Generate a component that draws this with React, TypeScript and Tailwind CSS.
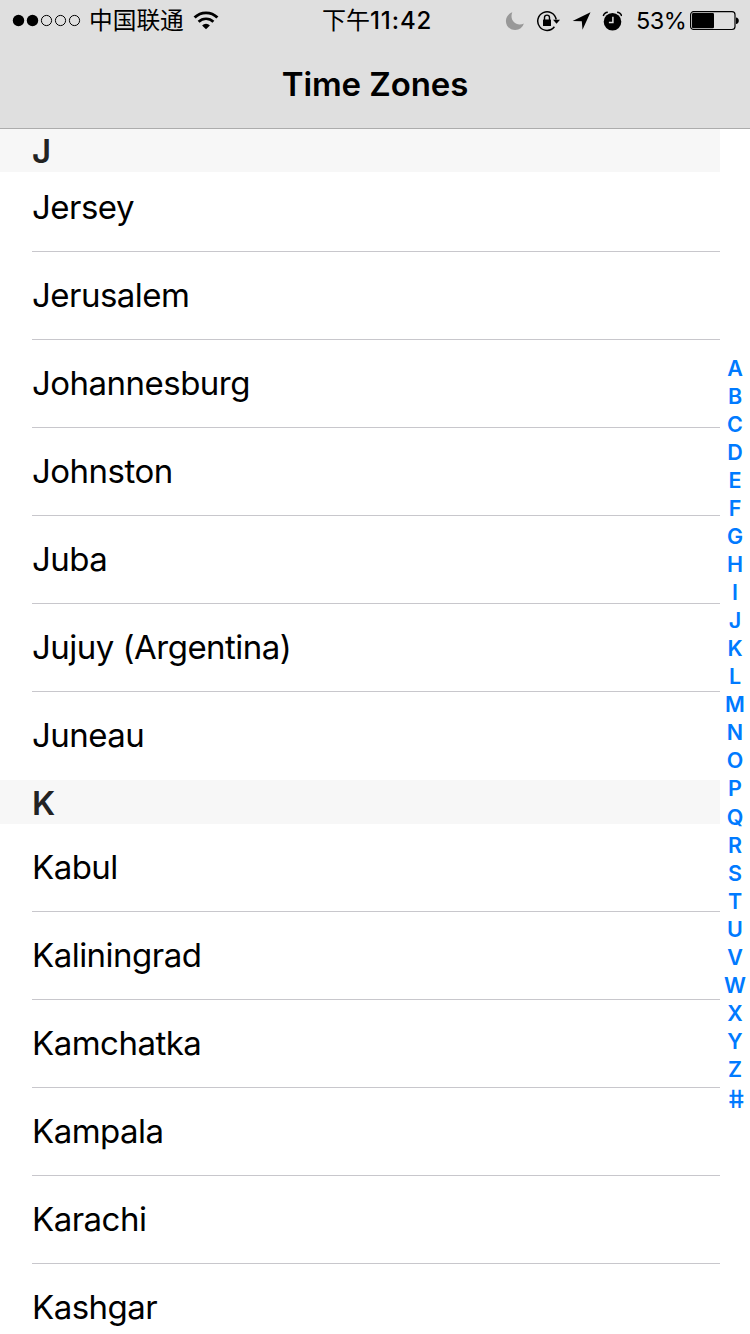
const SECTIONS = [
  {
    letter: 'J',
    zones: ['Jersey', 'Jerusalem', 'Johannesburg', 'Johnston', 'Juba', 'Jujuy (Argentina)', 'Juneau'],
  },
  {
    letter: 'K',
    zones: ['Kabul', 'Kaliningrad', 'Kamchatka', 'Kampala', 'Karachi', 'Kashgar'],
  },
];

const INDEX = 'ABCDEFGHIJKLMNOPQRSTUVWXYZ'.split('');

function SignalDots() {
  return (
    <svg className="h-[14px] w-[70px] shrink-0" viewBox="0 0 70 14">
      {[0, 1, 2, 3, 4].map((i) => (
        <circle
          key={i}
          cx={6.5 + i * 14}
          cy={6.5}
          r={i < 2 ? 5.7 : 5.1}
          fill={i < 2 ? '#000' : 'none'}
          stroke={i < 2 ? 'none' : '#000'}
          strokeWidth={1}
        />
      ))}
    </svg>
  );
}

function WifiIcon() {
  return (
    <svg className="h-[19px] w-[26px] shrink-0" viewBox="0 0 26 19" fill="none" stroke="#000">
      <path d="M1.6 6.6a16.1 16.1 0 0 1 22.8 0" strokeWidth="2.9" />
      <path d="M5.6 10.8a10.5 10.5 0 0 1 14.8 0" strokeWidth="2.7" />
      <path d="M13 18.3l-3.9-3.9a5.5 5.5 0 0 1 7.8 0z" fill="#000" stroke="none" />
    </svg>
  );
}

function MoonIcon() {
  return (
    <svg className="h-[20px] w-[20px] shrink-0" viewBox="0 0 20 20">
      <path d="M7.3 1.2a10 10 0 0 0-.8 3.9c0 5 3.6 8.4 8.2 8.4 1.6 0 3-.3 4.2-.9A9.3 9.3 0 0 1 10.2 19C5 19 .9 15 .9 9.9.9 6 3.5 2.6 7.3 1.2z" fill="#989898" />
    </svg>
  );
}

function RotationLockIcon() {
  return (
    <svg className="h-[22px] w-[24px] shrink-0" viewBox="0 0 24 22" fill="none" stroke="#000">
      <path d="M20.2 9.500a9.3 9.3 0 1 0-1.8 7.3" strokeWidth="1.5" />
      <path d="M17 9.7h7l-3.5 4z" fill="#000" stroke="none" />
      <rect x="7" y="9.500" width="8" height="6.600" rx=".5" fill="#000" stroke="none" />
      <path d="M8.500 10V7.600a2.500 2.500 0 0 1 5 0V10" strokeWidth="1.400" />
    </svg>
  );
}

function LocationIcon() {
  return (
    <svg className="h-[18px] w-[19px] shrink-0" viewBox="0 0 19 18">
      <path d="M18.5.3 10.500 17.700 9.800 9.300.6 8.900z" fill="#000" />
    </svg>
  );
}

function AlarmIcon() {
  return (
    <svg className="h-[20px] w-[20px] shrink-0" viewBox="0 0 20 20" fill="none">
      <circle cx="10.500" cy="10.800" r="8.800" fill="#000" />
      <path d="M10.900 5.700v5.700H6.900" stroke="#dfdfdf" strokeWidth="1.500" />
      <path d="M1.300 5A5 5 0 0 1 5.800 1.300M15.100 1.300a5 5 0 0 1 4.500 3.700" stroke="#000" strokeWidth="1.500" />
    </svg>
  );
}

function BatteryIcon() {
  return (
    <svg className="h-[20px] w-[50px] shrink-0" viewBox="0 0 50 20">
      <rect x=".6" y=".7" width="44.400" height="17.800" rx="3" fill="none" stroke="#000" strokeWidth="1.2" />
      <rect x="2" y="2" width="22" height="15.200" rx="1.2" fill="#000" />
      <path d="M46 6.500c1.700 0 2.800 1.500 2.800 3.300s-1.100 3.300-2.800 3.300z" fill="#000" />
    </svg>
  );
}

function StatusBar() {
  return (
    <div className="flex h-[42px] w-full items-center">
      <div className="flex w-[322px] shrink-0 items-center pl-3">
        <SignalDots />
        <span className="ml-[7px] w-[96px] whitespace-nowrap text-[23.7px] leading-[42px]">中国联通</span>
        <span className="ml-2 flex pb-0.5"><WifiIcon /></span>
      </div>
      <div className="w-[183px] shrink-0 whitespace-nowrap text-[24px] font-medium leading-[42px] tracking-[0.9px]">
        <span className="font-normal tracking-normal">下午</span>11:42
      </div>
      <MoonIcon />
      <span className="ml-[11px] flex"><RotationLockIcon /></span>
      <span className="ml-[12px] flex"><LocationIcon /></span>
      <span className="ml-[11px] flex pb-px"><AlarmIcon /></span>
      <span className="ml-[14px] w-[54px] whitespace-nowrap text-[23.5px] leading-[42px] tracking-[-0.5px]">53%</span>
      <BatteryIcon />
    </div>
  );
}

function SectionHeader({ letter }: { letter: string }) {
  return (
    <h2 className="h-11 bg-[#f7f7f7] pl-8 text-[33px] font-semibold leading-[47px] text-[#232323]">{letter}</h2>
  );
}

export default function App() {
  return (
    <div className="flex h-[1334px] w-[750px] flex-col overflow-hidden bg-white font-['Inter','Noto_Sans_CJK_SC',sans-serif] text-black">
      <header className="z-10 h-[129px] shrink-0 border-b border-[#acacac] bg-[#dfdfdf]">
        <StatusBar />
        <h1 className="text-center text-[33px] font-semibold leading-[85px] tracking-[-0.1px]">Time Zones</h1>
      </header>
      <div className="-mt-px flex min-h-0 flex-1">
        <main className="w-[720px] overflow-hidden">
          {SECTIONS.map((section, s) => (
            <section key={section.letter}>
              <SectionHeader letter={section.letter} />
              <ul className={s === 0 ? '-mt-2' : ''}>
                {section.zones.map((zone, i) => (
                  <li
                    key={zone}
                    className={`ml-8 h-[88px] border-b text-[33px] leading-[87px] tracking-[-0.52px] whitespace-nowrap ${
                      i === section.zones.length - 1 ? 'border-transparent' : 'border-[#c8c7cc]'
                    }`}
                  >
                    {zone}
                  </li>
                ))}
              </ul>
            </section>
          ))}
        </main>
        <nav className="flex w-[30px] flex-col items-center pt-[226px] text-[21.5px] font-semibold text-[#007aff]">
          {INDEX.map((letter) => (
            <span key={letter} className="h-[28.04px] shrink-0 leading-[28px]">{letter}</span>
          ))}
          <span className="h-[28px] shrink-0 -skew-x-[-9deg] text-[25px] font-medium leading-[32px] tracking-[-1px]">#</span>
        </nav>
      </div>
    </div>
  );
}
